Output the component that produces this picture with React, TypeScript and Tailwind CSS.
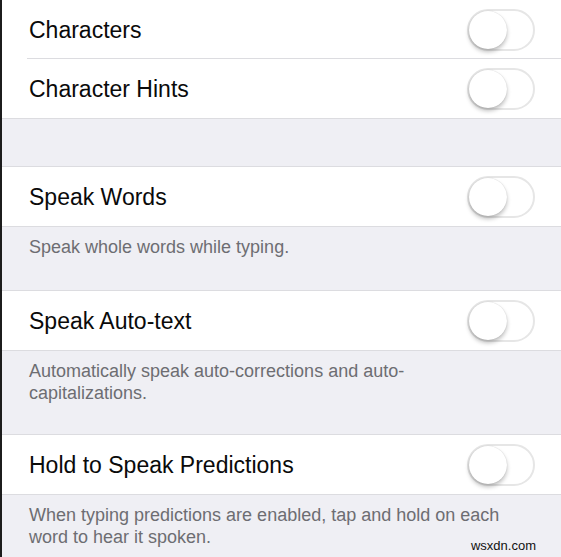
import React from 'react'

function Toggle() {
  return (
    <div className="relative w-[68px] h-[42px] rounded-full border-2 border-[#e6e6e6] bg-white shrink-0">
      <div className="absolute left-0 top-0 w-[38px] h-[38px] rounded-full bg-white shadow-[0_3px_4px_rgba(0,0,0,0.25),0_0_1px_rgba(0,0,0,0.2)]"></div>
    </div>
  )
}

function Row({ label, last = true }: { label: string; last?: boolean }) {
  return (
    <div className="flex items-center h-[59px] pl-[27px] pr-[26px] relative">
      <span className="flex-1 text-[23px] text-[#0a0a0a] leading-none pt-[2px]">{label}</span>
      <Toggle />
      {!last && <div className="absolute left-[25px] right-0 bottom-0 h-px bg-[#dcdce0]"></div>}
    </div>
  )
}

function Group({ children }: { children: React.ReactNode }) {
  return <div className="bg-white border-y border-[#dcdce0]">{children}</div>
}

function Footer({ text, h }: { text: string; h: string }) {
  return (
    <div className={`px-[27px] pt-[9px] text-[18px] leading-[22px] text-[#6d6d72] ${h}`}>
      <span>{text}</span>
    </div>
  )
}

export default function App() {
  return (
    <div
      className="relative w-[561px] h-[557px] overflow-hidden bg-[#efeff4] border-l-2 border-[#1c1c1c]"
      style={{ fontFamily: '"Liberation Sans", Arial, sans-serif' }}
    >
      <div className="-mt-px">
        <Group>
          <Row label="Characters" last={false} />
          <Row label="Character Hints" />
        </Group>
        <div className="h-[47px]"></div>
        <Group>
          <Row label="Speak Words" />
        </Group>
        <Footer text="Speak whole words while typing." h="h-[63px]" />
        <Group>
          <Row label="Speak Auto-text" />
        </Group>
        <Footer text="Automatically speak auto-corrections and auto-capitalizations." h="h-[83px] pr-[130px]" />
        <Group>
          <Row label="Hold to Speak Predictions" />
        </Group>
        <Footer text="When typing predictions are enabled, tap and hold on each word to hear it spoken." h="h-[70px] pr-[40px]" />
      </div>
      <div className="absolute right-[25px] bottom-[2px] text-[13px] text-[#111]">wsxdn.com</div>
    </div>
  )
}
